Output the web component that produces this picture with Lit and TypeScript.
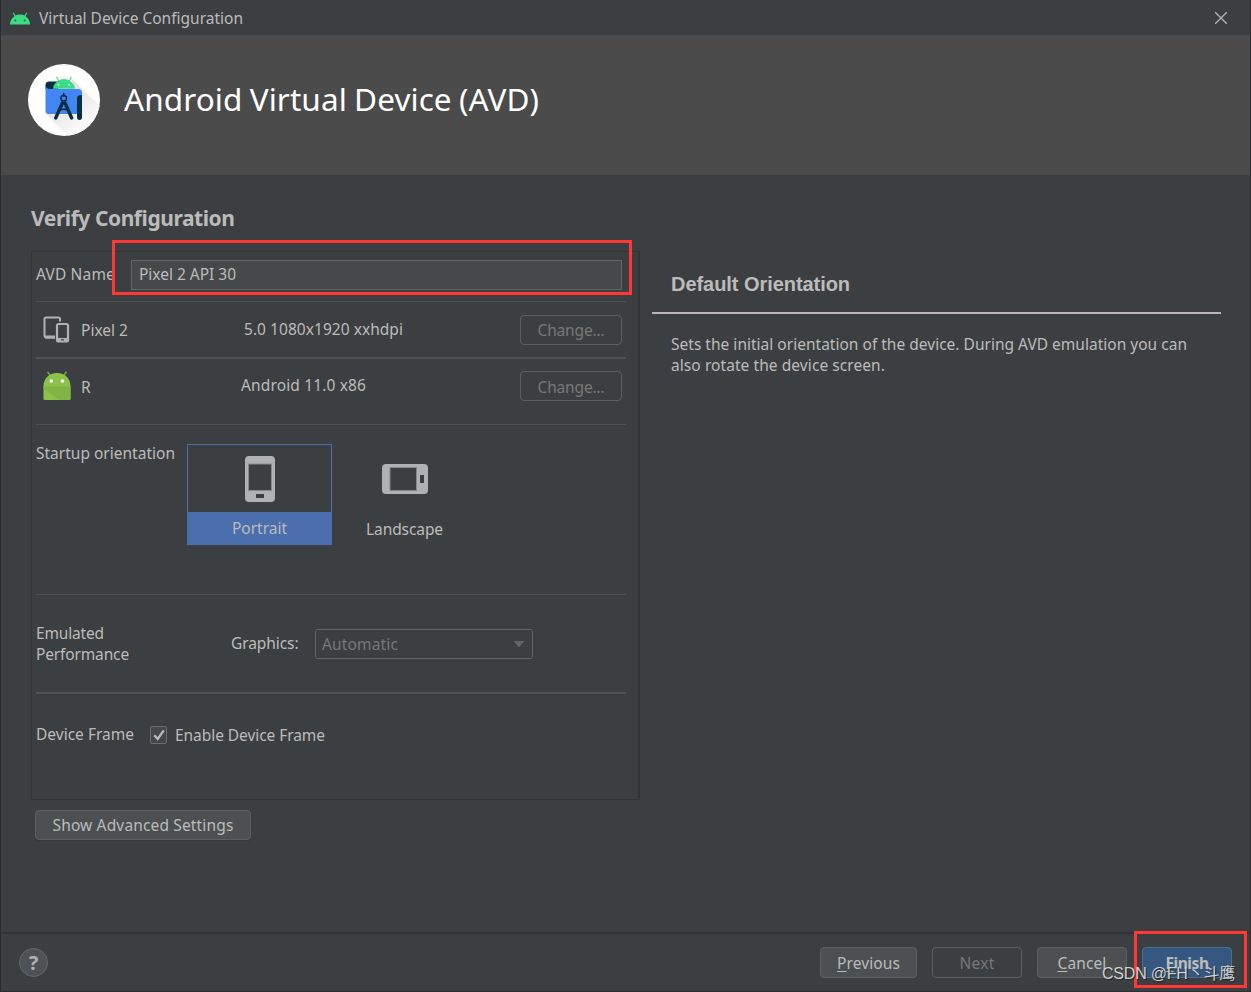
import { LitElement, html, css, svg } from "lit";
import { customElement, property } from "lit/decorators.js";

/** A single line of text whose tracking is tuned so that it fills a given width. */
@customElement("fit-text")
class FitText extends LitElement {
  @property({ type: Number }) width = 0;
  static styles = css`
    :host { display: block; white-space: nowrap; flex: none; line-height: 21px; }
    .run { display: inline-block; }
  `;
  render() {
    return html`<span class="run"><slot></slot></span>`;
  }
  firstUpdated() {
    const run = this.renderRoot.querySelector(".run") as HTMLElement;
    const count = (this.textContent || "").trim().length;
    const natural = run.getBoundingClientRect().width;
    if (this.width && count > 1) {
      run.style.letterSpacing = `${(this.width - natural) / count}px`;
    }
  }
}

const androidHead = html`<svg class="head" width="20" height="13" viewBox="0 0 20 13">
  <path d="M0 12.6A10 9.6 0 0 1 4.3 4.4L3 1.1L4 .6L5.3 3.6Q7.4 2.4 10 2.4T14.7 3.6L16 .6L17 1.1L15.7 4.4A10 9.6 0 0 1 20 12.6Z" fill="#3ddc84"/>
  <circle cx="5.4" cy="8.4" r=".9" fill="#35594a"/><circle cx="14.6" cy="8.4" r=".9" fill="#35594a"/></svg>`;

const studioLogo = html`<svg class="logo" width="72" height="72" viewBox="0 0 72 72">
  <defs>
    <linearGradient id="sh" x1="0.2" y1="0.1" x2="0.8" y2="0.9">
      <stop offset="0" stop-color="#d8d8d8"/><stop offset="1" stop-color="#fff"/>
    </linearGradient>
    <clipPath id="disc"><circle cx="36" cy="36" r="36"/></clipPath>
  </defs>
  <circle cx="36" cy="36" r="36" fill="#fff"/>
  <g clip-path="url(#disc)">
    <path d="M43 14L72 42V72H40L18 50L54 44Z" fill="url(#sh)"/>
  </g>
  <path d="M21 17.5H30V25H17.5V21Q17.5 17.5 21 17.5Z" fill="#073042"/>
  <path d="M17.5 21Q18 25 22 25H50Q54 25 54 29V50H20.5Q17.5 50 17.5 47Z" fill="#4285f4"/>
  <path d="M49 34Q49 31 54 31V53Q54 56 51.5 56T49 53Z" fill="#073042"/>
  <path d="M25 24.8Q25.5 19.5 30 17L28 13L28.8 12.6L31 16.3Q36 13.8 41 16.3L43 12.6L43.8 13L42 17Q46.5 19.5 47 24.8Z" fill="#3ddc84"/>
  <circle cx="30.5" cy="20.7" r=".9" fill="#fff"/><circle cx="41" cy="20.7" r=".9" fill="#fff"/>
  <g stroke="#073042" fill="none" stroke-linecap="round">
    <path d="M35.7 29.5V32" stroke-width="1.6"/>
    <circle cx="35.7" cy="34.3" r="2.8" stroke-width="1.5"/>
    <path d="M34.400 39L27.700 54M37 39L43.700 54" stroke-width="3.400"/>
    <path d="M32 46.200Q35.700 44.200 39.500 46.200" stroke-width="1.500"/>
  </g></svg>`;

const devicesIcon = html`<svg class="devices" width="27" height="27" viewBox="0 0 27 27">
  <path d="M12 21.4H3Q1.5 21.4 1.5 20V3Q1.5 1.5 3 1.5H15.5Q17 1.5 17 3V5.5" fill="none" stroke="#afb1b3" stroke-width="2"/>
  <path d="M2 19.5H12V22.5H2Z" fill="#afb1b3"/>
  <rect x="14" y="8" width="11" height="17.5" rx="1.8" fill="none" stroke="#afb1b3" stroke-width="2.2"/>
  <path d="M14 22H25V25.5H14Z" fill="#afb1b3"/><path d="M18 23.2H21V24.4H18Z" fill="#3c3f41"/></svg>`;

const droidIcon = html`<svg class="droid" width="28" height="30" viewBox="0 0 28 30">
  <path d="M7.2 4.5L4.6 .8M20.8 4.5L23.4 .8" stroke="#74a044" stroke-width="1.5"/>
  <path d="M.5 15.5C.5 7.5 6 2 14 2S27.500 7.500 27.500 15.500V27.500Q27.500 29 26 29H2Q.5 29 .5 27.500Z" fill="#8bc34a"/>
  <path d="M.5 15.500H27.500V28Q27 29 26 29H17L.5 18Z" fill="#80b545"/>
  <circle cx="8.300" cy="10" r="1.800" fill="#fff"/><circle cx="19.500" cy="10" r="1.800" fill="#fff"/></svg>`;

const phoneShape = svg`
  <path fill-rule="evenodd" d="M4 0H26Q30 0 30 4V42Q30 46 26 46H4Q0 46 0 42V4Q0 0 4 0ZM4 8V34H26V8ZM11 38V42H19V38Z" fill="#afb1b3"/>
  <rect x="3.500" y="8" width="23" height="26.500" fill="none" stroke="#85888a"/>`;

@customElement("app-root")
class AppRoot extends LitElement {
  static styles = css`
    :host {
      display: flex; flex-direction: column; position: relative; box-sizing: border-box;
      width: 1251px; height: 992px; overflow: hidden; background: #3c3f41; color: #bbbbbb;
      border: solid #2b2d2e; border-width: 0 1px 1px 1px;
      font: 15.5px/21px "Noto Sans", "Open Sans", sans-serif;
    }
    svg { display: block; flex: none; }
    .titlebar { display: flex; height: 35px; flex: none; padding: 0 22px 0 9px; }
    .titlebar .head { margin-top: 12px; }
    .titlebar fit-text { margin: 8px 0 0 9px; flex: 1; }
    .titlebar .close { margin-top: 11px; }
    .header { display: flex; height: 140px; flex: none; background: #4b4b4b; padding-left: 27px; }
    .logo { margin-top: 29px; }
    .header fit-text { margin: 42px 0 0 24px; font-size: 31.5px; line-height: 44px; color: #fff; word-spacing: -1px; }
    .content { display: flex; flex: 1; }
    .left { width: 610px; padding-left: 30px; }
    .subtitle { margin-top: 33px; height: 30px; font-size: 21px; font-weight: 700; line-height: 30px; }
    .panel {
      margin-top: 13px; box-sizing: border-box; width: 609px; height: 549px;
      border: 1px solid #323435; border-right-width: 2px; padding: 0 12px 0 4px;
    }
    .row { display: flex; align-items: flex-start; border-bottom: 1px solid #515151; box-sizing: border-box; }
    .thick { border-bottom-width: 2px; }
    .name { height: 50px; }
    .device { height: 57px; }
    .image { height: 66px; }
    .orient { height: 170px; }
    .perf { height: 99px; }
    .frame { border: 0; height: 100px; }
    .cell { flex: none; }
    .button {
      box-sizing: border-box; height: 30px; display: flex; justify-content: center; flex: none;
      border: 1px solid #5e6060; border-radius: 4px; background: #4c5052; padding-top: 4px;
    }
    .button.off { background: none; color: #777777; }
    .button.primary { background: #365880; border-color: #4c708c; font-weight: 700; }
    u { text-decoration: underline; text-underline-offset: 2px; }
    .field {
      box-sizing: border-box; width: 491px; height: 30px; background: #45494a;
      border: 1px solid #646464; padding: 3px 0 0 7px; margin: 8px 0 0 17px;
    }
    .name .caption { width: 78px; margin-top: 12px; }
    .device .devices { margin: 14px 0 0 7px; }
    .device .title { width: 163px; margin: 18px 0 0 11px; }
    .device .detail { width: 276px; margin-top: 17px; }
    .device .button { width: 102px; margin-top: 13px; }
    .image .droid { margin: 12px 0 0 7px; }
    .image .title { width: 160px; margin: 18px 0 0 10px; }
    .image .detail { width: 279px; margin-top: 16px; }
    .image .button { width: 102px; margin-top: 12px; }
    .image .button fit-text { margin-top: 1px; }
    .orient .caption { width: 151px; margin-top: 18px; }
    .choice { box-sizing: border-box; width: 145px; height: 101px; margin-top: 19px; border: 1px solid transparent; display: flex; flex-direction: column; }
    .choice.on { border-color: #4b6eaf; }
    .picture { display: flex; height: 67px; align-items: center; justify-content: center; padding-top: 1px; box-sizing: border-box; }
    .choice .tag { flex: 1; display: flex; justify-content: center; padding-top: 7px; }
    .choice.on .tag { background: #4b6eaf; padding-top: 6px; }
    .perf .caption { width: 195px; margin-top: 28px; }
    .perf .graphics { width: 84px; margin-top: 38px; }
    .combo {
      box-sizing: border-box; width: 218px; height: 30px; margin-top: 34px; border: 1px solid #646464;
      border-radius: 3px; color: #777777; display: flex; padding: 4px 7px 0 6px; justify-content: space-between;
    }
    .combo svg { margin-top: 6px; }
    .frame .caption { width: 113.500px; margin-top: 30px; }
    .check { box-sizing: border-box; width: 17.500px; height: 18px; margin: 32px 8px 0 0; border: 1px solid #6b6b6b; border-radius: 2px; background: #43494a; }
    .frame .enable { margin-top: 31px; }
    .advanced { width: 216px; margin: 10px 0 0 4px; box-shadow: 0 1px 1px #35383a; }
    .right { width: 570px; margin-left: 11px; }
    .right h3 {
      margin: 0; height: 137px; padding: 99px 0 0 19px; box-sizing: border-box;
      font: 700 20px/22px "Liberation Sans", Arial, sans-serif;
    }
    .rule { height: 2px; background: #bbb7b7; width: 569px; }
    .help-copy { padding: 20px 0 0 19px; }
    .footer { display: flex; height: 59px; flex: none; border-top: 2px solid #323232; box-sizing: border-box; padding: 13px 18px 0 18px; gap: 15px; }
    .footer .button { width: 90px; height: 31px; padding-top: 5px; }
    .footer .previous { width: 97px; }
    .help { width: 29px; height: 29px; margin: 1px auto 0 0; box-sizing: border-box; border: 1px solid #66696a; border-radius: 50%; background: #4e5254; font: 700 20px/28px "Noto Sans", sans-serif; text-align: center; color: #afb1b3; }
    .mark { position: absolute; box-sizing: border-box; border: 3px solid #ff3735; }
    .mark.a { left: 111px; top: 240px; width: 520px; height: 55px; }
    .mark.b { left: 1133px; top: 931px; width: 113px; height: 57px; }
    .stamp { position: absolute; left: 1101px; top: 963px; font: 16px/22px "Liberation Sans", "Noto Sans CJK SC", sans-serif; color: #d0d1d1; text-shadow: 1px 1px 1px #222; }
  `;

  render() {
    return html`
      <div class="titlebar">
        ${androidHead}<fit-text width="204">Virtual Device Configuration</fit-text>
        <svg class="close" width="14" height="14" viewBox="0 0 14 14"><path d="M1.200 1.200L12.800 12.800M12.800 1.200L1.200 12.800" stroke="#b4b6b7" stroke-width="1.300"/></svg>
      </div>
      <div class="header">${studioLogo}<fit-text width="415">Android Virtual Device (AVD)</fit-text></div>
      <div class="content">
        <div class="left">
          <div class="subtitle"><fit-text width="203.5">Verify Configuration</fit-text></div>
          <div class="panel">
            <div class="row name">
              <fit-text class="cell caption" width="79">AVD Name</fit-text>
              <div class="field"><fit-text width="97">Pixel 2 API 30</fit-text></div>
            </div>
            <div class="row device thick">
              ${devicesIcon}
              <fit-text class="cell title" width="47">Pixel 2</fit-text>
              <fit-text class="cell detail" width="159">5.0 1080x1920 xxhdpi</fit-text>
              <div class="button off"><fit-text width="67">Change...</fit-text></div>
            </div>
            <div class="row image">
              ${droidIcon}
              <fit-text class="cell title">R</fit-text>
              <fit-text class="cell detail" width="125">Android 11.0 x86</fit-text>
              <div class="button off"><fit-text width="67">Change...</fit-text></div>
            </div>
            <div class="row orient">
              <fit-text class="cell caption" width="139">Startup orientation</fit-text>
              <div class="choice on">
                <div class="picture"><svg width="30" height="46" viewBox="0 0 30 46">${phoneShape}</svg></div>
                <div class="tag"><fit-text width="55">Portrait</fit-text></div>
              </div>
              <div class="choice">
                <div class="picture"><svg width="46" height="30" viewBox="0 0 46 30"><g transform="translate(0 30) rotate(-90)">${phoneShape}</g></svg></div>
                <div class="tag"><fit-text width="77">Landscape</fit-text></div>
              </div>
            </div>
            <div class="row perf thick">
              <div class="cell caption"><fit-text width="68">Emulated</fit-text><fit-text width="93">Performance</fit-text></div>
              <fit-text class="cell graphics" width="67.5">Graphics:</fit-text>
              <div class="combo">
                <fit-text width="76">Automatic</fit-text>
                <svg width="12" height="8" viewBox="0 0 12 8"><path d="M.5 1H11.500L6 7.200Z" fill="#646464"/></svg>
              </div>
            </div>
            <div class="row frame">
              <fit-text class="cell caption" width="98">Device Frame</fit-text>
              <div class="check"><svg width="16" height="16" viewBox="0 0 16 16"><path d="M3.300 8.300L6.700 12L12.800 3.300" fill="none" stroke="#bbbbbb" stroke-width="2.300"/></svg></div>
              <fit-text class="enable" width="150">Enable Device Frame</fit-text>
            </div>
          </div>
          <div class="button advanced"><fit-text width="181">Show Advanced Settings</fit-text></div>
        </div>
        <div class="right">
          <h3><fit-text width="179">Default Orientation</fit-text></h3>
          <div class="rule"></div>
          <div class="help-copy">
            <fit-text width="516">Sets the initial orientation of the device. During AVD emulation you can</fit-text>
            <fit-text width="214">also rotate the device screen.</fit-text>
          </div>
        </div>
      </div>
      <div class="footer">
        <div class="help">?</div>
        <div class="button previous"><fit-text width="63"><u>P</u>revious</fit-text></div>
        <div class="button off"><fit-text width="35">Next</fit-text></div>
        <div class="button"><fit-text width="49"><u>C</u>ancel</fit-text></div>
        <div class="button primary"><fit-text width="43"><u>F</u>inish</fit-text></div>
      </div>
      <div class="mark a"></div>
      <div class="mark b"></div>
      <div class="stamp"><fit-text width="133">CSDN @FH丶斗鹰</fit-text></div>
    `;
  }
}
